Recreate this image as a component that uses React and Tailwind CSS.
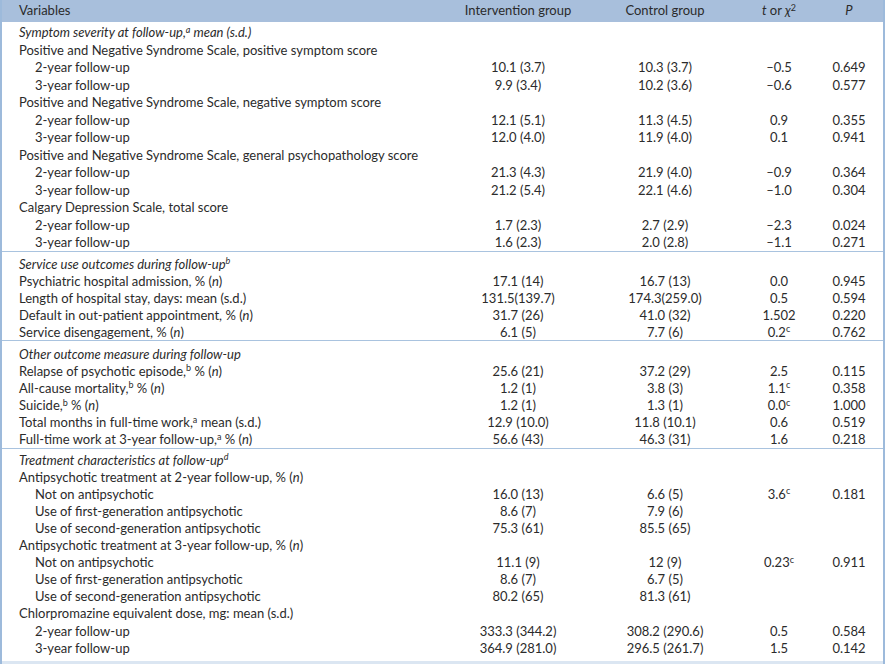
import React from "react";

const Sup = ({ children }) => <sup className="text-[9px]">{children}</sup>;
const N = () => <i>n</i>;

const sections = [
  {
    pad: "pt-[1px]",
    rowH: "h-[17.5px]",
    rows: [
      { label: <i>Symptom severity at follow-up,<Sup>a</Sup> mean (s.d.)</i> },
      { label: "Positive and Negative Syndrome Scale, positive symptom score" },
      { label: "2-year follow-up", indent: true, cells: ["10.1 (3.7)", "10.3 (3.7)", "–0.5", "0.649"] },
      { label: "3-year follow-up", indent: true, cells: ["9.9 (3.4)", "10.2 (3.6)", "–0.6", "0.577"] },
      { label: "Positive and Negative Syndrome Scale, negative symptom score" },
      { label: "2-year follow-up", indent: true, cells: ["12.1 (5.1)", "11.3 (4.5)", "0.9", "0.355"] },
      { label: "3-year follow-up", indent: true, cells: ["12.0 (4.0)", "11.9 (4.0)", "0.1", "0.941"] },
      { label: "Positive and Negative Syndrome Scale, general psychopathology score" },
      { label: "2-year follow-up", indent: true, cells: ["21.3 (4.3)", "21.9 (4.0)", "–0.9", "0.364"] },
      { label: "3-year follow-up", indent: true, cells: ["21.2 (5.4)", "22.1 (4.6)", "–1.0", "0.304"] },
      { label: "Calgary Depression Scale, total score" },
      { label: "2-year follow-up", indent: true, cells: ["1.7 (2.3)", "2.7 (2.9)", "–2.3", "0.024"] },
      { label: "3-year follow-up", indent: true, cells: ["1.6 (2.3)", "2.0 (2.8)", "–1.1", "0.271"] },
    ],
  },
  {
    pad: "pt-[3px]",
    rowH: "h-[17px]",
    rows: [
      { label: <i>Service use outcomes during follow-up<Sup>b</Sup></i> },
      { label: <>Psychiatric hospital admission, % (<N />)</>, cells: ["17.1 (14)", "16.7 (13)", "0.0", "0.945"] },
      { label: "Length of hospital stay, days: mean (s.d.)", cells: ["131.5(139.7)", "174.3(259.0)", "0.5", "0.594"] },
      { label: <>Default in out-patient appointment, % (<N />)</>, cells: ["31.7 (26)", "41.0 (32)", "1.502", "0.220"] },
      { label: <>Service disengagement, % (<N />)</>, cells: ["6.1 (5)", "7.7 (6)", <>0.2<Sup>c</Sup></>, "0.762"] },
    ],
  },
  {
    pad: "pt-[4px]",
    rowH: "h-[17.2px]",
    rows: [
      { label: <i>Other outcome measure during follow-up</i> },
      { label: <>Relapse of psychotic episode,<Sup>b</Sup> % (<N />)</>, cells: ["25.6 (21)", "37.2 (29)", "2.5", "0.115"] },
      { label: <>All-cause mortality,<Sup>b</Sup> % (<N />)</>, cells: ["1.2 (1)", "3.8 (3)", <>1.1<Sup>c</Sup></>, "0.358"] },
      { label: <>Suicide,<Sup>b</Sup> % (<N />)</>, cells: ["1.2 (1)", "1.3 (1)", <>0.0<Sup>c</Sup></>, "1.000"] },
      { label: <>Total months in full-time work,<Sup>a</Sup> mean (s.d.)</>, cells: ["12.9 (10.0)", "11.8 (10.1)", "0.6", "0.519"] },
      { label: <>Full-time work at 3-year follow-up,<Sup>a</Sup> % (<N />)</>, cells: ["56.6 (43)", "46.3 (31)", "1.6", "0.218"] },
    ],
  },
  {
    pad: "pt-[2px]",
    rowH: "h-[17.1px]",
    rows: [
      { label: <i>Treatment characteristics at follow-up<Sup>d</Sup></i> },
      { label: <>Antipsychotic treatment at 2-year follow-up, % (<N />)</> },
      { label: "Not on antipsychotic", indent: true, cells: ["16.0 (13)", "6.6 (5)", <>3.6<Sup>c</Sup></>, "0.181"] },
      { label: "Use of first-generation antipsychotic", indent: true, cells: ["8.6 (7)", "7.9 (6)", "", ""] },
      { label: "Use of second-generation antipsychotic", indent: true, cells: ["75.3 (61)", "85.5 (65)", "", ""] },
      { label: <>Antipsychotic treatment at 3-year follow-up, % (<N />)</> },
      { label: "Not on antipsychotic", indent: true, cells: ["11.1 (9)", "12 (9)", <>0.23<Sup>c</Sup></>, "0.911"] },
      { label: "Use of first-generation antipsychotic", indent: true, cells: ["8.6 (7)", "6.7 (5)", "", ""] },
      { label: "Use of second-generation antipsychotic", indent: true, cells: ["80.2 (65)", "81.3 (61)", "", ""] },
      { label: "Chlorpromazine equivalent dose, mg: mean (s.d.)" },
      { label: "2-year follow-up", indent: true, cells: ["333.3 (344.2)", "308.2 (290.6)", "0.5", "0.584"] },
      { label: "3-year follow-up", indent: true, cells: ["364.9 (281.0)", "296.5 (261.7)", "1.5", "0.142"] },
    ],
  },
];

const grid = "grid grid-cols-[448px_136px_158px_70px_70px]";

const Row = ({ row, rowH }) => {
  const cells = row.cells || ["", "", "", ""];
  return (
    <div className={`${grid} ${rowH} items-center`}>
      <div className={`whitespace-nowrap ${row.indent ? "pl-[33px]" : "pl-[17px]"}`}>
        {row.label}
      </div>
      {cells.map((c, i) => (
        <div key={i} className="text-center whitespace-nowrap">
          {c}
        </div>
      ))}
    </div>
  );
};

export default function App() {
  return (
    <div className="w-[886px] h-[664px] bg-white overflow-hidden font-['Lato',sans-serif] text-[13px] text-[#2b2b2b]">
      <div className="w-[885px] h-full flex flex-col border-x-2 border-[#9dbadb]">
        {/* Header */}
        <div className={`${grid} h-[22px] items-center bg-[#a8bfdc] shrink-0`}>
          <div className="pl-[17px]">Variables</div>
          <div className="text-center">Intervention group</div>
          <div className="text-center">Control group</div>
          <div className="text-center">
            <i>t</i> or <i>χ</i>
            <Sup>2</Sup>
          </div>
          <div className="text-center">
            <i>P</i>
          </div>
        </div>

        {/* Body sections */}
        {sections.map((sec, si) => (
          <div
            key={si}
            className={`${sec.pad} shrink-0 ${si < sections.length - 1 ? "border-b border-[#a9c3df]" : ""}`}
          >
            {sec.rows.map((row, ri) => (
              <Row key={ri} row={row} rowH={sec.rowH} />
            ))}
          </div>
        ))}

        <div className="flex-1" />
        <div className="h-[3px] bg-[#dbe6f2] shrink-0" />
      </div>
    </div>
  );
}
